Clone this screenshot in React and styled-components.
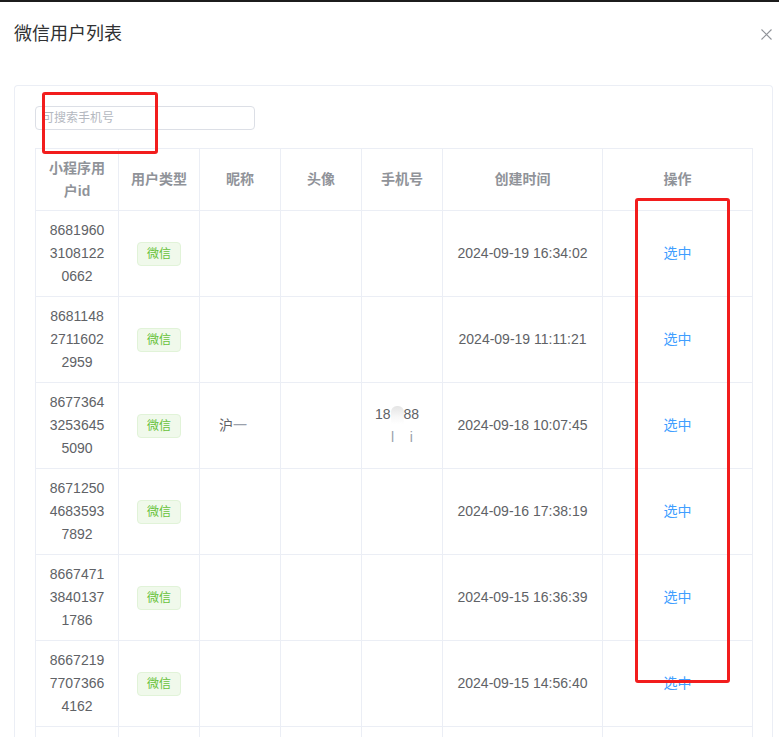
import React from 'react';
import styled, { createGlobalStyle } from 'styled-components';

const GlobalStyle = createGlobalStyle`
    html, body {
        margin: 0;
        padding: 0;
        background: #fff;
        overflow: hidden;
    }
    body {
        font-family: "Liberation Sans", "Noto Sans CJK SC", sans-serif;
        color: #606266;
    }
`;

const Page = styled.div`
    position: relative;
    width: 779px;
    height: 737px;
    overflow: hidden;
    border-top: 2px solid #1c1c1c;
    box-sizing: border-box;
`;

const Header = styled.div`
    display: flex;
    align-items: center;
    justify-content: space-between;
    height: 24px;
    padding: 20px 7px 0 14px;
`;

const Title = styled.div`
    font-size: 18px;
    line-height: 24px;
    color: #303133;
`;

const Close = styled.button`
    width: 12px;
    height: 12px;
    padding: 0;
    border: none;
    background: none;
    display: flex;
    align-items: center;
    justify-content: center;
    cursor: pointer;
`;

const Card = styled.div`
    margin: 39px 6px 0 14px;
    padding: 20px 20px 0 20px;
    border: 1px solid #ebeef5;
    border-radius: 4px;
    border-bottom: none;
`;

const Search = styled.input`
    display: block;
    width: 220px;
    height: 24px;
    box-sizing: border-box;
    padding: 0 6px;
    border: 1px solid #dcdfe6;
    border-radius: 4px;
    font-family: inherit;
    font-size: 12px;
    color: #606266;
    outline: none;

    &::placeholder {
        color: #b4b8bf;
    }
`;

const Table = styled.table`
    margin-top: 18px;
    width: 717px;
    table-layout: fixed;
    border-collapse: collapse;
    font-size: 14px;

    & th, & td {
        border: 1px solid #ebeef5;
        text-align: center;
        padding: 0 9px;
        line-height: 23px;
        word-break: break-all;
    }

    & th {
        height: 61px;
        color: #909399;
        font-weight: bold;
    }

    & td {
        height: 85px;
        color: #606266;
    }
`;

const Tag = styled.span`
    display: inline-block;
    height: 24px;
    line-height: 22px;
    box-sizing: border-box;
    padding: 0 9px;
    font-size: 12px;
    color: #67c23a;
    background: #f0f9eb;
    border: 1px solid #e1f3d8;
    border-radius: 4px;
`;

const Pick = styled.a`
    color: #409eff;
    text-decoration: none;
    cursor: pointer;
`;

const Smudge = styled.span`
    display: inline-block;
    width: ${p => p.w}px;
    height: 18px;
    vertical-align: middle;
    background: linear-gradient(180deg, #e4e4e4 0%, #f7f7f7 60%, #fff 100%);
    border-radius: 6px 6px 0 0;
`;

const Faint = styled.span`
    color: #9aa0ab;
`;

const Spacer = styled.span`
    display: inline-block;
    width: ${p => p.w}px;
`;

const Mark = styled.div`
    position: absolute;
    left: ${p => p.x}px;
    top: ${p => p.y}px;
    width: ${p => p.w}px;
    height: ${p => p.h}px;
    box-sizing: border-box;
    border: 3px solid #f21d1d;
    border-radius: 3px;
    pointer-events: none;
`;

const rows = [
    { id: '868196031081220662', time: '2024-09-19 16:34:02' },
    { id: '868114827116022959', time: '2024-09-19 11:11:21' },
    { id: '867736432536455090', time: '2024-09-18 10:07:45', nick: true, phone: true },
    { id: '867125046835937892', time: '2024-09-16 17:38:19' },
    { id: '866747138401371786', time: '2024-09-15 16:36:39' },
    { id: '866721977073664162', time: '2024-09-15 14:56:40' },
    { id: '866690211583447051', time: '2024-09-15 09:21:17' },
];

const chunk = (s) => s.match(/.{1,7}/g);

const App = () => {
    return (
        <Page>
            <GlobalStyle />
            <Header>
                <Title>微信用户列表</Title>
                <Close aria-label="关闭">
                    <svg width="11" height="11" viewBox="0 0 11 11">
                        <path d="M0.5 0.5 L10.5 10.5 M10.5 0.5 L0.5 10.5" stroke="#909399" strokeWidth="1.1" />
                    </svg>
                </Close>
            </Header>
            <Card>
                <Search placeholder="可搜索手机号" />
                <Table>
                    <colgroup>
                        <col style={{ width: 83 }} />
                        <col style={{ width: 81 }} />
                        <col style={{ width: 81 }} />
                        <col style={{ width: 81 }} />
                        <col style={{ width: 81 }} />
                        <col style={{ width: 160 }} />
                        <col style={{ width: 150 }} />
                    </colgroup>
                    <thead>
                        <tr>
                            <th>小程序用户id</th>
                            <th>用户类型</th>
                            <th>昵称</th>
                            <th>头像</th>
                            <th>手机号</th>
                            <th>创建时间</th>
                            <th>操作</th>
                        </tr>
                    </thead>
                    <tbody>
                        {rows.map(r => (
                            <tr key={r.id}>
                                <td>
                                    {chunk(r.id).map((c, i) => <div key={i}>{c}</div>)}
                                </td>
                                <td><Tag>微信</Tag></td>
                                <td>{r.nick ? <span>沪<Faint>一</Faint><Spacer w={14} /></span> : null}</td>
                                <td></td>
                                <td>
                                    {r.phone ? (
                                        <>
                                            <div>18<Smudge w={13} />88<Spacer w={10} /></div>
                                            <div><Faint>l&nbsp;&nbsp;&nbsp;&nbsp;i</Faint></div>
                                        </>
                                    ) : null}
                                </td>
                                <td>{r.time}</td>
                                <td><Pick>选中</Pick></td>
                            </tr>
                        ))}
                    </tbody>
                </Table>
            </Card>
            <Mark x={42} y={90} w={116} h={62} />
            <Mark x={635} y={196} w={95} h={485} />
        </Page>
    );
};

export default App;
